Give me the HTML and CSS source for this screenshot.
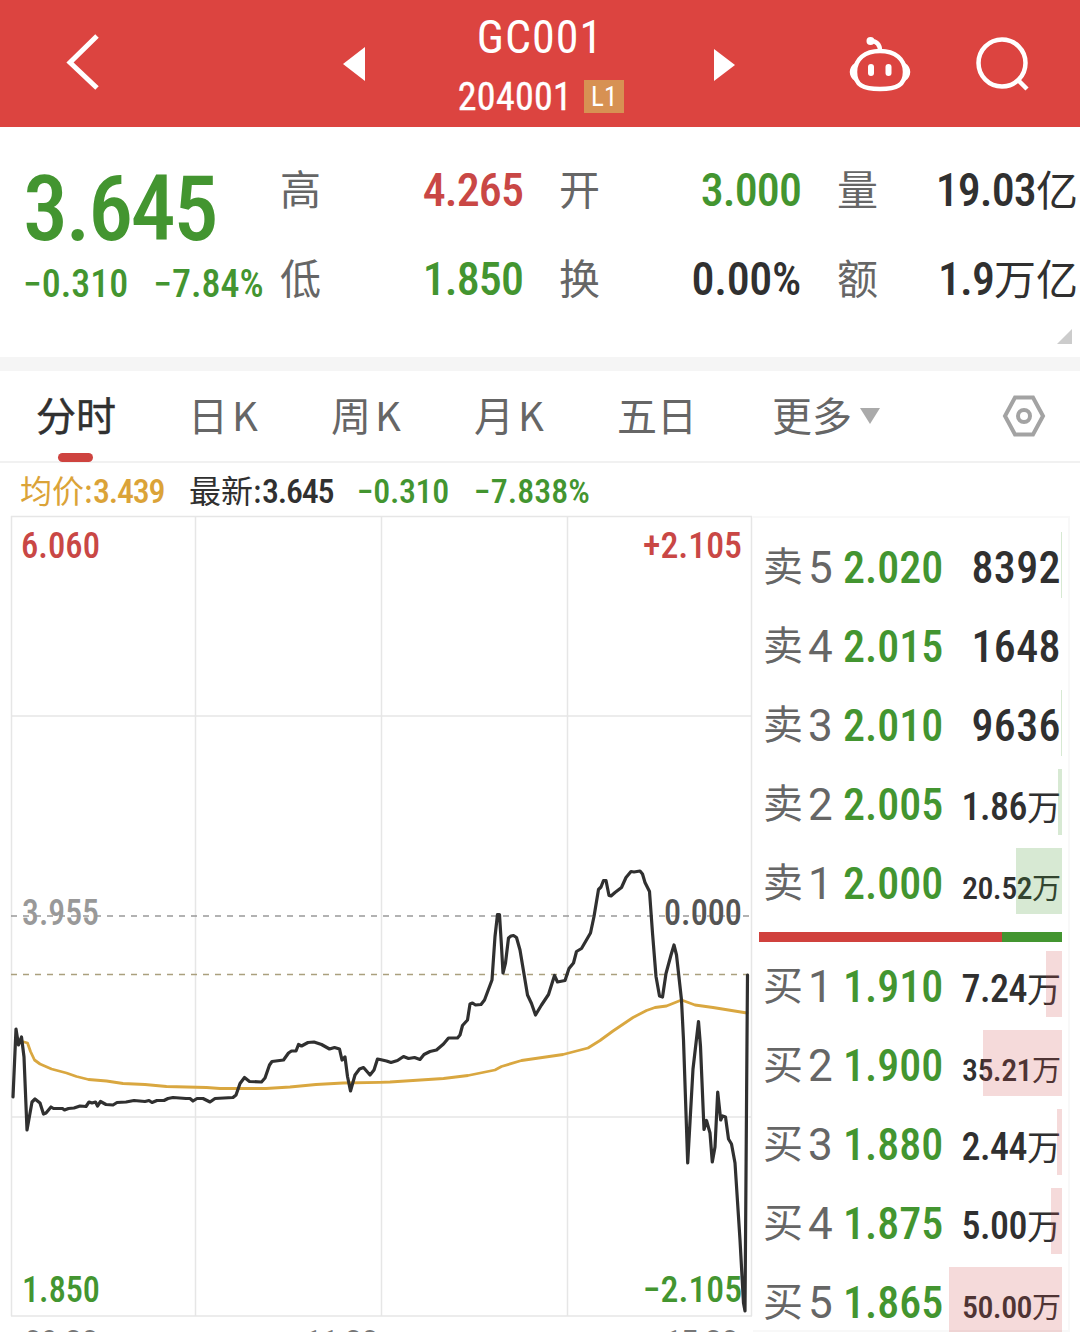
FILE: index.html
```html
<!DOCTYPE html>
<html lang="zh-CN">

<head>
    <meta charset="UTF-8">
    <meta name="viewport" content="width=device-width, initial-scale=1.0">
    <title>GC001 204001</title>
    <link rel="stylesheet" href="styles.css">
</head>

<body>
    <header class="topbar">
        <svg class="back" width="36" height="60" viewBox="0 0 36 60">
            <path d="M32 4 L5 30.500 L32 56" />
        </svg>
        <svg class="prev" width="24" height="36" viewBox="0 0 24 36">
            <path d="M23 1 V35 L1 18 Z" />
        </svg>
        <div class="title">
            <h1>GC001</h1>
            <p><span class="code">204001</span><span class="level">L1</span></p>
        </div>
        <svg class="next" width="22" height="34" viewBox="0 0 22 34">
            <path d="M0 1 V33 L21 17 Z" />
        </svg>
        <svg class="robot" width="62" height="58" viewBox="0 0 62 58">
            <path class="line" d="M31 15 C16 15 6 23 6 36 C6 49 14 53 31 53 C48 53 56 49 56 36 C56 23 46 15 31 15 Z" />
            <path class="line" d="M31 15 C31 8 27 5 22 5" />
            <path class="ear" d="M6 27 C-1 31 -1 41 6 45 Z M56 27 C63 31 63 41 56 45 Z" />
            <circle cx="21.500" cy="5" r="4" />
            <rect x="19" y="28" width="6" height="12" rx="3" />
            <rect x="36.500" y="28" width="6" height="12" rx="3" />
        </svg>
        <svg class="search" width="54" height="56" viewBox="0 0 54 56">
            <circle cx="26" cy="26" r="23.500" />
            <path d="M42 43 L51 52" />
        </svg>
    </header>

    <section class="quote">
        <div class="now green">
            <div class="price">3.645</div>
            <div class="change"><span>−0.310</span><span>−7.84%</span></div>
        </div>
        <dl class="stats">
            <div><dt>高</dt><dd class="red">4.265</dd></div>
            <div><dt>开</dt><dd class="green">3.000</dd></div>
            <div><dt>量</dt><dd>19.03<i>亿</i></dd></div>
            <div><dt>低</dt><dd class="green">1.850</dd></div>
            <div><dt>换</dt><dd class="turnover">0.00%</dd></div>
            <div><dt>额</dt><dd>1.9<i>万亿</i></dd></div>
        </dl>
        <span class="corner"></span>
    </section>

    <nav class="tabs">
        <a class="active">分时</a>
        <a>日K</a>
        <a>周K</a>
        <a>月K</a>
        <a>五日</a>
        <a class="more">更多</a>
        <svg class="setting" width="44" height="44" viewBox="0 0 44 44">
            <path d="M13 3.500 H31 L41 22 L31 40.500 H13 L3 22 Z" />
            <circle cx="22" cy="22" r="6" />
        </svg>
    </nav>

    <div class="info">
        <span class="avg"><i>均价:</i>3.439</span>
        <span class="last"><i>最新:</i>3.645</span>
        <span class="diff green">−0.310</span>
        <span class="green">−7.838%</span>
    </div>

    <main>
        <svg class="chart" width="753" height="820" viewBox="0 512 753 820">
            <path class="grid" d="M11 516.500 H752 M11 716 H752 M11 1117 H752 M11 1316 H752 M11.500 516 V1316 M195.500 516 V1316 M381.500 516 V1316 M567.500 516 V1316 M751.500 516 V1316" />
            <path class="dash" d="M11 916 H749" />
            <path class="dash tan" d="M11 974.500 H749" />
            <polyline class="avg-line" points="24,1042 27.5,1043 30.5,1051.5 34.5,1060 40,1064 51.5,1069 66.5,1073 76.5,1076.5 88.5,1079.5 106.5,1081 123,1083.5 145,1084.5 166.5,1086.5 206.5,1087.5 220,1088.5 266,1088.5 290,1087 316,1084.5 343,1083 380,1082.3 390,1082 443.5,1078.5 468,1075.5 495,1070 501.5,1066.5 521.5,1060.5 563,1054.5 588,1048 600,1040.5 613,1031 633,1017.5 646.5,1010.5 655,1007.5 666.5,1006 681.5,1000 695,1005 713,1007.5 747,1013" />
            <text class="mid" x="22" y="925" textLength="77" lengthAdjust="spacingAndGlyphs">3.955</text>
            <text class="zero" x="664" y="925" textLength="78" lengthAdjust="spacingAndGlyphs">0.000</text>
            <text class="up" x="21" y="558" textLength="79" lengthAdjust="spacingAndGlyphs">6.060</text>
            <text class="up" x="643" y="558" textLength="99" lengthAdjust="spacingAndGlyphs">+2.105</text>
            <text class="down" x="22" y="1302" textLength="78" lengthAdjust="spacingAndGlyphs">1.850</text>
            <text class="down" x="643" y="1302" textLength="99" lengthAdjust="spacingAndGlyphs">−2.105</text>
            <polyline class="price-line" points="13,1097 16,1029 18.5,1045 21.5,1037 24,1057 27,1130 32,1102 35,1099 40,1103 43.5,1114 46,1113 51,1107 53.5,1108.5 62.5,1108.5 64.5,1110 68.5,1108.5 74,1108 80,1106 86,1106.5 89,1102 92,1103 95.5,1102 97.5,1106 100.5,1101.5 106,1104.5 113,1105 117,1102.5 126,1102 134,1100.5 145,1101.5 149,1100.5 152,1102.500 157,1100.5 164,1100.5 168,1098.5 173,1097.5 186,1098.5 190,1098.5 193,1101 197,1098.5 203,1098.5 210,1102 215,1098.5 233,1097.5 236,1095 240,1083.5 244.5,1077.5 249.5,1081.5 261.5,1082 265,1078 269.5,1065 272,1061.5 283.5,1060 288.5,1053 291.5,1051 296,1051 298.5,1044.5 301.5,1046 308,1042.5 314,1042 321.5,1044.5 329.5,1049 334.5,1047.5 339.5,1049 342,1060 345,1057 347.5,1076.5 350.5,1091 355,1075 359.5,1069 363.5,1067.5 370,1075 374,1070 377.5,1059 380,1059.5 386.5,1061 391,1062.5 397.5,1060.5 403.5,1056.5 408.5,1058.5 414.5,1057.5 420,1059.5 424,1054.5 430,1051.5 436.5,1050 443.5,1044 448.5,1038 457.5,1038 460,1035 462.5,1025.5 467.5,1020 470,1004 472.5,1003 475.5,1005 481,1004.5 484.5,1000 492,980 495,936.5 497.5,914.5 499.5,914.5 501.5,946.5 503,973 505.5,963 508.5,938 511,936 513.5,935.5 516.5,937.5 520,950 527.5,995 531.5,1003.5 535.5,1015 541.5,1005 548.5,994.5 554.5,975.5 557.5,982 565,980.5 569,968.5 573.5,963 576.5,951.5 581.5,948.5 590.5,933 594,916.5 598.5,889.5 601,887 603.5,880.5 606,880.5 609,895.5 611,896 615,892.5 621.5,887.5 626,877.5 631,871.5 634,872 640,871 642.5,874 645,882.5 649.5,891.5 652.5,933 656,976.5 659.5,996 662.5,997 666,973.5 671,955 674,945 676.5,955 681.5,1000 683.5,1040 687.7,1163 693,1069 698.5,1021.5 700.5,1046.5 704,1129.5 706.5,1120.5 710,1133 712.3,1162 715,1147 717.7,1092 720.7,1120 722.5,1116 725.5,1117 728.5,1139 731.5,1144 735,1163 740,1240 743.5,1303 745,1311 747,1040 747.5,975" />
            <text class="time" x="24" y="1356" textLength="75">09:30</text>
            <text class="time" x="304" y="1356" textLength="75">11:30</text>
            <text class="time" x="664" y="1356" textLength="75">15:30</text>
        </svg>

        <div class="book">
            <ul class="sell">
                <li><b>卖<i>5</i></b><span class="p">2.020</span><span class="v">8392</span><em style="width: 1px"></em></li>
                <li><b>卖<i>4</i></b><span class="p">2.015</span><span class="v">1648</span></li>
                <li><b>卖<i>3</i></b><span class="p">2.010</span><span class="v">9636</span><em style="width: 1px"></em></li>
                <li><b>卖<i>2</i></b><span class="p">2.005</span><span class="v mid-size">1.86<i>万</i></span><em style="width: 4px"></em></li>
                <li><b>卖<i>1</i></b><span class="p">2.000</span><span class="v small-size">20.52<i>万</i></span><em style="width: 46px"></em></li>
            </ul>
            <div class="ratio"><span></span></div>
            <ul class="buy">
                <li><b>买<i>1</i></b><span class="p">1.910</span><span class="v mid-size">7.24<i>万</i></span><em style="width: 16px"></em></li>
                <li><b>买<i>2</i></b><span class="p">1.900</span><span class="v small-size">35.21<i>万</i></span><em style="width: 79px"></em></li>
                <li><b>买<i>3</i></b><span class="p">1.880</span><span class="v mid-size">2.44<i>万</i></span><em style="width: 5px"></em></li>
                <li><b>买<i>4</i></b><span class="p">1.875</span><span class="v mid-size">5.00<i>万</i></span><em style="width: 11px"></em></li>
                <li><b>买<i>5</i></b><span class="p">1.865</span><span class="v small-size">50.00<i>万</i></span><em style="width: 113px"></em></li>
            </ul>
        </div>
    </main>
</body>

</html>
```
FILE: styles.css
```css
:root {
    --red: #dc4440;
    --text-red: #c94745;
    --green: #439530;
    --dark: #303030;
    --gray: #666;
    --num: Roboto, "Noto Sans CJK SC", sans-serif;
    --cjk: "Noto Sans CJK SC", sans-serif;
}

* {
    box-sizing: border-box;
    margin: 0;
    padding: 0;
}

body {
    width: 1080px;
    height: 1332px;
    overflow: hidden;
    background: #fff;
    color: var(--dark);
    font-family: var(--num);
    font-weight: 500;
    font-stretch: condensed;
}

i {
    font-style: normal;
    font-family: var(--cjk);
    font-weight: 400;
    line-height: 0;
    letter-spacing: 0;
}

ul {
    list-style: none;
}

.green {
    color: var(--green);
}

.red {
    color: var(--text-red);
}

/* top bar */
.topbar {
    display: flex;
    height: 127px;
    background: var(--red);
    color: #fff;
}

.topbar svg {
    flex: none;
    fill: #fff;
}

.back {
    margin: 32px 0 0 65px;
}

.topbar .back,
.topbar .search,
.topbar .line {
    fill: none;
    stroke: #fff;
    stroke-width: 5;
}

.prev {
    margin: 46px 0 0 241px;
}

.title {
    width: 348px;
    text-align: center;
}

.title h1 {
    height: 74px;
    font-size: 46px;
    font-weight: 400;
    line-height: 75px;
    letter-spacing: 1px;
}

.title p {
    display: flex;
    justify-content: center;
    align-items: center;
    gap: 12px;
    height: 46px;
    line-height: 46px;
}

.code {
    font-size: 38px;
    font-weight: 400;
    letter-spacing: 0.3px;
    -webkit-text-stroke: 0.4px #fff;
}

.level {
    width: 40px;
    height: 33px;
    margin: -1px -2px 0 0;
    background: #d79153;
    font-size: 27px;
    font-weight: 400;
    line-height: 34px;
}

.next {
    margin: 48px 0 0;
}

.robot {
    margin: 36px 0 0 113px;
}

.topbar .robot .line {
    stroke-width: 4.5;
}

.topbar .search {
    margin: 37px 0 0 65px;
    stroke-width: 4.5;
}

/* quote */
.quote {
    position: relative;
    display: flex;
    height: 230px;
}

.now {
    width: 280px;
    padding: 37px 0 0 23px;
}

.price {
    height: 91px;
    font-size: 90px;
    line-height: 91px;
    letter-spacing: -2.4px;
}

.change {
    display: flex;
    gap: 25px;
    height: 56px;
    font-size: 38px;
    line-height: 58px;
    white-space: nowrap;
}

.stats {
    display: grid;
    grid-template-columns: 243px 242px 241px;
    grid-template-rows: 89px 89px;
    column-gap: 36px;
    padding-top: 18px;
}

.stats div {
    display: flex;
    justify-content: space-between;
    line-height: 89px;
}

.stats dt {
    margin-top: -2px;
    font-family: var(--cjk);
    font-size: 41px;
    font-weight: 400;
    color: var(--gray);
}

.stats dd {
    font-size: 46px;
    letter-spacing: -0.9px;
    line-height: 91px;
    white-space: nowrap;
}

.stats .turnover {
    letter-spacing: -0.3px;
}

.stats dd i {
    font-size: 42px;
}

.corner {
    position: absolute;
    right: 8px;
    bottom: 13px;
    border-left: 15px solid transparent;
    border-bottom: 15px solid #ccc;
}

/* tabs */
.tabs {
    display: flex;
    height: 106px;
    border-top: 14px solid #f5f5f5;
    border-bottom: 2px solid #f1f1f1;
    padding-left: 36px;
    font-family: var(--cjk);
    font-size: 40px;
    font-weight: 400;
    line-height: 86px;
    color: var(--gray);
}

.tabs a {
    position: relative;
    width: 143px;
    white-space: nowrap;
}

.tabs a:nth-child(2),
.tabs a:nth-child(3),
.tabs a:nth-child(4) {
    letter-spacing: 4px;
}

.tabs .active {
    width: 152px;
    color: var(--dark);
    -webkit-text-stroke: 0.5px var(--dark);
}

.tabs .active::after {
    content: "";
    position: absolute;
    left: 22px;
    bottom: -1px;
    width: 35px;
    height: 9px;
    border-radius: 5px;
    background: #ce433f;
}

.tabs a:nth-child(5) {
    width: 155px;
}

.tabs .more {
    width: 230px;
}

.more::after {
    content: "";
    display: inline-block;
    margin-left: 8px;
    border: 10px solid transparent;
    border-top: 16px solid #aaa;
    border-bottom: 0;
    vertical-align: 7px;
}

.setting {
    margin-top: 23px;
    fill: none;
    stroke: #a3a3a3;
    stroke-width: 4;
}

/* average / latest */
.info {
    display: flex;
    height: 49px;
    padding-left: 20px;
    font-size: 34px;
    line-height: 57px;
}

.info i {
    font-size: 32px;
}

.avg,
.last {
    width: 169px;
    letter-spacing: -1.2px;
}

.avg {
    color: #dba338;
}

.last {
    width: 168px;
}

.diff {
    width: 117px;
    letter-spacing: -0.4px;
}

/* chart */
main {
    display: flex;
    height: 820px;
}

.chart {
    flex: none;
}

.chart text {
    font-size: 36px;
}

.grid {
    fill: none;
    stroke: #e6e6e6;
    stroke-width: 1.5;
}

.dash {
    stroke: #999;
    stroke-width: 1.5;
    stroke-dasharray: 6 6;
}

.tan {
    stroke: #aaa07e;
}

.avg-line,
.price-line {
    fill: none;
    stroke: #d9a740;
    stroke-width: 2.8;
    stroke-linejoin: round;
    stroke-linecap: round;
}

.price-line {
    stroke: #303030;
    stroke-width: 3.2;
}

.mid {
    fill: #999;
}

.zero {
    fill: #555;
}

.up {
    fill: var(--text-red);
}

.down {
    fill: var(--green);
}

.time {
    fill: #777;
}

/* order book */
.book {
    width: 317px;
    margin-top: 4px;
    padding: 9px 6px 0;
    border: 2px solid #f8f8f8;
    border-left: 0;
}

.book li {
    position: relative;
    display: flex;
    align-items: baseline;
    height: 79px;
    padding-left: 4px;
    line-height: 79px;
}

.book b {
    position: relative;
    top: -2px;
    width: 80px;
    font-family: var(--cjk);
    font-size: 40px;
    font-weight: 400;
    white-space: nowrap;
    color: var(--gray);
}

.book b i {
    margin-left: 5px;
    font-family: Roboto, sans-serif;
    font-size: 44px;
    font-stretch: normal;
    vertical-align: -2px;
}

.p {
    width: 100px;
    text-align: right;
    font-size: 44px;
    color: var(--green);
}

.v {
    flex: 1;
    margin-right: 1px;
    text-align: right;
    font-size: 44px;
    letter-spacing: 0.4px;
    white-space: nowrap;
}

.mid-size {
    font-size: 38px;
    letter-spacing: -0.5px;
}

.mid-size i {
    font-size: 34px;
}

.small-size {
    font-size: 32px;
    letter-spacing: -0.6px;
}

.small-size i {
    font-size: 29px;
}

.book em {
    position: absolute;
    right: 0;
    top: 5px;
    height: 66px;
    background: #43953036;
}

.buy em {
    background: #cc444433;
}

.ratio {
    height: 10px;
    margin: 10px 0 4px;
    background: var(--green);
}

.ratio span {
    display: block;
    width: 243px;
    height: 10px;
    background: #d0413d;
}
```
